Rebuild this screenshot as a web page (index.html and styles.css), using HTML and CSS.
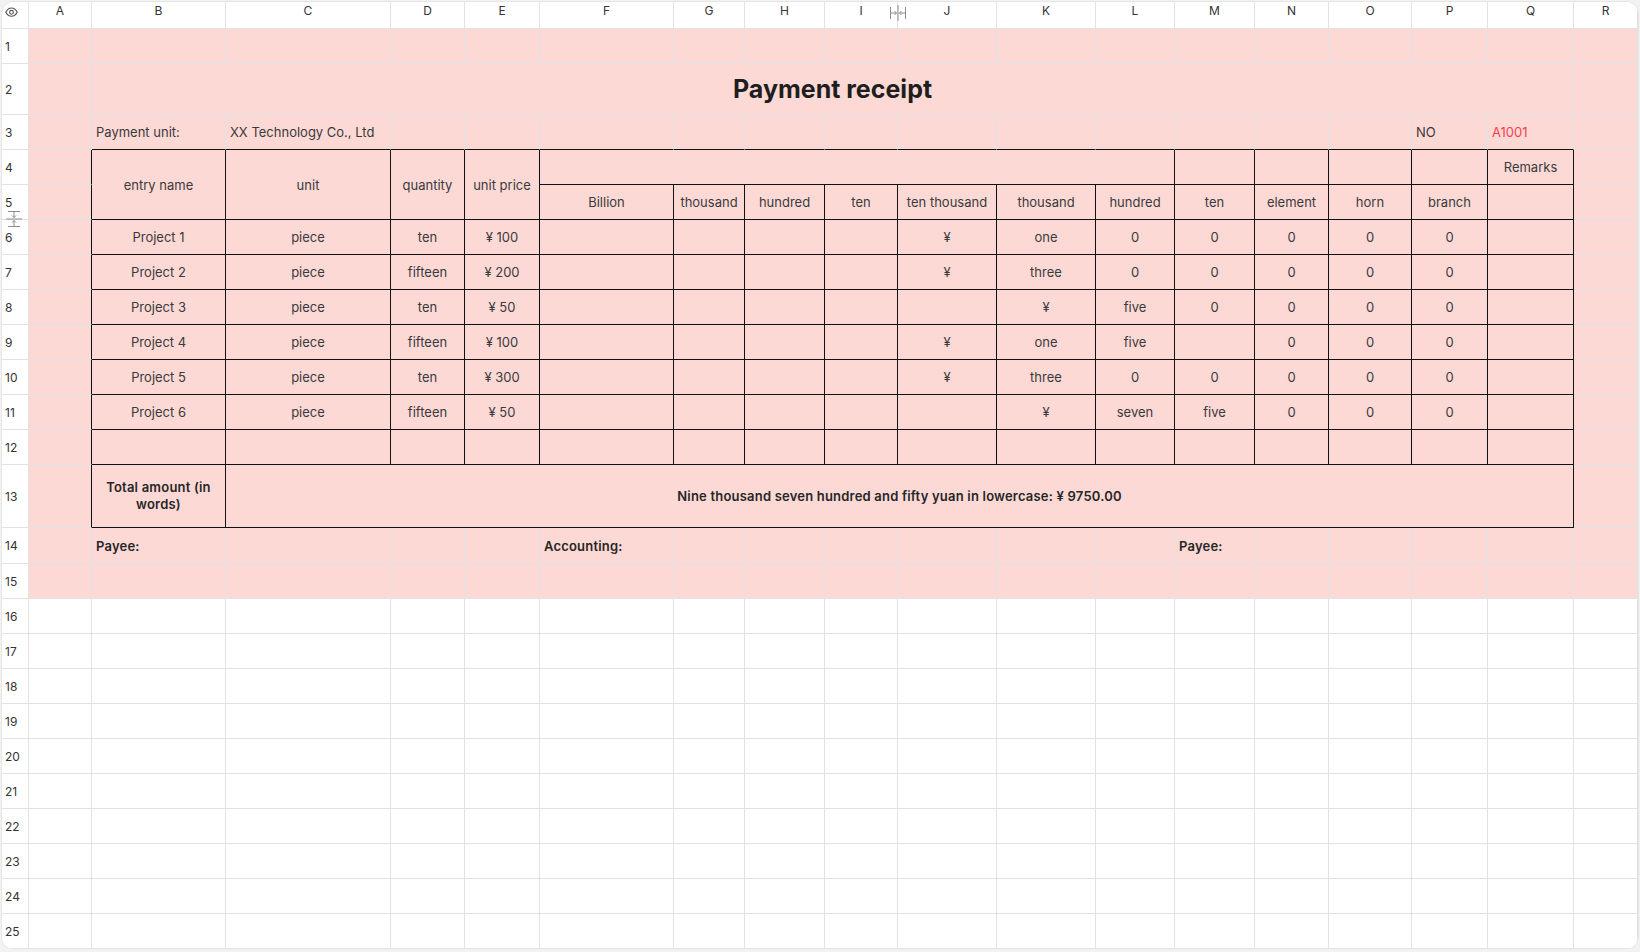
FILE: index.html
```html
<!DOCTYPE html>
<html>
<head>
  <title>Payment receipt</title>
  <link rel="stylesheet" href="styles.css">
</head>
<body>
  <div class="sheet">
    <!-- column letters -->
    <div class="row head">
      <div class="corner">
        <svg width="13" height="10" viewBox="0 0 13 10" fill="none" stroke="#555" stroke-width="1.1">
          <path d="M0.8 5.2C2.3 2.4 4.2 1 6.5 1s4.2 1.4 5.7 4.2C10.7 8 8.8 9.2 6.5 9.2S2.3 8 0.8 5.2z"/>
          <circle cx="6.5" cy="5.3" r="1.9"/>
        </svg>
      </div>
      <div>A</div><div>B</div><div>C</div><div>D</div><div>E</div><div>F</div><div>G</div><div>H</div>
      <div class="drag">I
        <svg class="cursor-col" width="18" height="16" viewBox="0 0 18 16" fill="none" stroke="#8c8c8c" stroke-width="1">
          <path d="M1.5 2v12M16.5 2v12M9 0v16"/>
          <path d="M2 8h5.5M5.5 6l2 2-2 2M16 8h-5.5M12.5 6l-2 2 2 2"/>
        </svg>
      </div>
      <div>J</div><div>K</div><div>L</div><div>M</div><div>N</div><div>O</div><div>P</div><div>Q</div><div>R</div>
    </div>

    <div class="row pink">
      <div class="rh">1</div>
      <div></div><div></div><div></div><div></div><div></div><div></div><div></div><div></div><div></div>
      <div></div><div></div><div></div><div></div><div></div><div></div><div></div><div></div><div></div>
    </div>

    <div class="row pink">
      <div class="rh">2</div>
      <div></div>
      <div class="title cs16">Payment receipt</div>
      <div></div>
    </div>

    <div class="row pink edge">
      <div class="rh">3</div>
      <div class="g"></div>
      <div class="l">Payment unit:</div>
      <div class="l">XX Technology Co., Ltd</div>
      <div></div><div></div><div></div><div></div><div></div><div></div>
      <div></div><div></div><div></div><div></div><div></div><div></div>
      <div class="l">NO</div>
      <div class="l red">A1001</div>
      <div class="g"></div>
    </div>

    <!-- receipt table -->
    <div class="row pink t">
      <div class="rh">4</div>
      <div class="a"></div>
      <div class="rs2">entry name</div>
      <div class="rs2">unit</div>
      <div class="rs2">quantity</div>
      <div class="rs2">unit price</div>
      <div class="cs7"></div>
      <div></div><div></div><div></div><div></div>
      <div>Remarks</div>
      <div class="g"></div>
    </div>

    <div class="row pink t">
      <div class="rh drag">5
        <svg class="cursor-row" width="16" height="18" viewBox="0 0 16 18" fill="none" stroke="#8c8c8c" stroke-width="1">
          <path d="M2 1.5h12M2 16.5h12M0 9h16"/>
          <path d="M8 2v5.5M6 5.5l2 2 2-2M8 16v-5.5M6 12.5l2-2 2 2"/>
        </svg>
      </div>
      <div class="a"></div>
      <div>Billion</div><div>thousand</div><div>hundred</div><div>ten</div><div>ten thousand</div><div>thousand</div>
      <div>hundred</div><div>ten</div><div>element</div><div>horn</div><div>branch</div><div></div>
      <div class="g"></div>
    </div>

    <div class="row pink t">
      <div class="rh">6</div>
      <div class="a"></div>
      <div>Project 1</div><div>piece</div><div>ten</div><div>¥ 100</div>
      <div></div><div></div><div></div><div></div>
      <div>¥</div><div>one</div><div>0</div><div>0</div><div>0</div><div>0</div><div>0</div><div></div>
      <div class="g"></div>
    </div>

    <div class="row pink t">
      <div class="rh">7</div>
      <div class="a"></div>
      <div>Project 2</div><div>piece</div><div>fifteen</div><div>¥ 200</div>
      <div></div><div></div><div></div><div></div>
      <div>¥</div><div>three</div><div>0</div><div>0</div><div>0</div><div>0</div><div>0</div><div></div>
      <div class="g"></div>
    </div>

    <div class="row pink t">
      <div class="rh">8</div>
      <div class="a"></div>
      <div>Project 3</div><div>piece</div><div>ten</div><div>¥ 50</div>
      <div></div><div></div><div></div><div></div>
      <div></div><div>¥</div><div>five</div><div>0</div><div>0</div><div>0</div><div>0</div><div></div>
      <div class="g"></div>
    </div>

    <div class="row pink t">
      <div class="rh">9</div>
      <div class="a"></div>
      <div>Project 4</div><div>piece</div><div>fifteen</div><div>¥ 100</div>
      <div></div><div></div><div></div><div></div>
      <div>¥</div><div>one</div><div>five</div><div></div><div>0</div><div>0</div><div>0</div><div></div>
      <div class="g"></div>
    </div>

    <div class="row pink t">
      <div class="rh">10</div>
      <div class="a"></div>
      <div>Project 5</div><div>piece</div><div>ten</div><div>¥ 300</div>
      <div></div><div></div><div></div><div></div>
      <div>¥</div><div>three</div><div>0</div><div>0</div><div>0</div><div>0</div><div>0</div><div></div>
      <div class="g"></div>
    </div>

    <div class="row pink t">
      <div class="rh">11</div>
      <div class="a"></div>
      <div>Project 6</div><div>piece</div><div>fifteen</div><div>¥ 50</div>
      <div></div><div></div><div></div><div></div>
      <div></div><div>¥</div><div>seven</div><div>five</div><div>0</div><div>0</div><div>0</div><div></div>
      <div class="g"></div>
    </div>

    <div class="row pink t">
      <div class="rh">12</div>
      <div class="a"></div>
      <div></div><div></div><div></div><div></div><div></div><div></div><div></div><div></div>
      <div></div><div></div><div></div><div></div><div></div><div></div><div></div><div></div>
      <div class="g"></div>
    </div>

    <div class="row pink t">
      <div class="rh">13</div>
      <div class="a"></div>
      <div class="b wrap">Total amount (in words)</div>
      <div class="b cs15">Nine thousand seven hundred and fifty yuan in lowercase: ¥ 9750.00</div>
      <div class="g"></div>
    </div>

    <div class="row pink">
      <div class="rh">14</div>
      <div></div>
      <div class="l b">Payee:</div>
      <div></div><div></div><div></div>
      <div class="l b">Accounting:</div>
      <div></div><div></div><div></div><div></div><div></div><div></div>
      <div class="l b">Payee:</div>
      <div></div><div></div><div></div><div></div><div></div>
    </div>

    <div class="row pink">
      <div class="rh">15</div>
      <div></div><div></div><div></div><div></div><div></div><div></div><div></div><div></div><div></div>
      <div></div><div></div><div></div><div></div><div></div><div></div><div></div><div></div><div></div>
    </div>

    <!-- empty rows -->
    <div class="row">
      <div class="rh">16</div>
      <div></div><div></div><div></div><div></div><div></div><div></div><div></div><div></div><div></div>
      <div></div><div></div><div></div><div></div><div></div><div></div><div></div><div></div><div></div>
    </div>
    <div class="row">
      <div class="rh">17</div>
      <div></div><div></div><div></div><div></div><div></div><div></div><div></div><div></div><div></div>
      <div></div><div></div><div></div><div></div><div></div><div></div><div></div><div></div><div></div>
    </div>
    <div class="row">
      <div class="rh">18</div>
      <div></div><div></div><div></div><div></div><div></div><div></div><div></div><div></div><div></div>
      <div></div><div></div><div></div><div></div><div></div><div></div><div></div><div></div><div></div>
    </div>
    <div class="row">
      <div class="rh">19</div>
      <div></div><div></div><div></div><div></div><div></div><div></div><div></div><div></div><div></div>
      <div></div><div></div><div></div><div></div><div></div><div></div><div></div><div></div><div></div>
    </div>
    <div class="row">
      <div class="rh">20</div>
      <div></div><div></div><div></div><div></div><div></div><div></div><div></div><div></div><div></div>
      <div></div><div></div><div></div><div></div><div></div><div></div><div></div><div></div><div></div>
    </div>
    <div class="row">
      <div class="rh">21</div>
      <div></div><div></div><div></div><div></div><div></div><div></div><div></div><div></div><div></div>
      <div></div><div></div><div></div><div></div><div></div><div></div><div></div><div></div><div></div>
    </div>
    <div class="row">
      <div class="rh">22</div>
      <div></div><div></div><div></div><div></div><div></div><div></div><div></div><div></div><div></div>
      <div></div><div></div><div></div><div></div><div></div><div></div><div></div><div></div><div></div>
    </div>
    <div class="row">
      <div class="rh">23</div>
      <div></div><div></div><div></div><div></div><div></div><div></div><div></div><div></div><div></div>
      <div></div><div></div><div></div><div></div><div></div><div></div><div></div><div></div><div></div>
    </div>
    <div class="row">
      <div class="rh">24</div>
      <div></div><div></div><div></div><div></div><div></div><div></div><div></div><div></div><div></div>
      <div></div><div></div><div></div><div></div><div></div><div></div><div></div><div></div><div></div>
    </div>
    <div class="row">
      <div class="rh">25</div>
      <div></div><div></div><div></div><div></div><div></div><div></div><div></div><div></div><div></div>
      <div></div><div></div><div></div><div></div><div></div><div></div><div></div><div></div><div></div>
    </div>
  </div>
</body>
</html>
```

FILE: styles.css
```css
body {
  margin: 0;
  padding: 2px 2px 0;
  background: #f2f2f2;
  font-family: Inter, "Noto Sans", sans-serif;
  font-size: 13px;
  color: #3a3a3a;
}

.sheet {
  display: grid;
  grid-template-columns: 27px 63px 134px 165px 74px 75px 134px 71px 80px 73px 99px 99px 79px 80px 74px 83px 76px 86px 1fr;
  grid-template-rows: 27px 35px 51px repeat(10, 35px) 63px 36px repeat(11, 35px);
  background: #fff;
  border-radius: 12px;
  box-shadow: 0 0 0 1px #e6e6e6;
  overflow: hidden;
}

.row {
  display: contents;
}

.row > div {
  display: flex;
  align-items: center;
  justify-content: center;
  min-width: 0;
  border-right: 1px solid #e2e2e2;
  border-bottom: 1px solid #e2e2e2;
  white-space: nowrap;
}

/* column letters */
.head > div {
  align-items: flex-start;
  padding-top: 1px;
  line-height: 16px;
  font-size: 12px;
  color: #333;
  background: #fff;
}

.head > .corner {
  justify-content: flex-start;
  padding: 5px 0 0 3px;
}

/* row numbers */
.row > .rh {
  justify-content: flex-start;
  padding-left: 3px;
  font-size: 12px;
  color: #333;
  background: #fff;
}

.drag {
  position: relative;
}

.cursor-col {
  position: absolute;
  top: 3px;
  right: -10px;
  z-index: 2;
}

.cursor-row {
  position: absolute;
  left: 4px;
  bottom: -9px;
  z-index: 2;
}

.pink > div {
  background: #fdd9d6;
}

/* receipt table borders */
.edge > div {
  border-bottom-color: #111;
}

.edge > .rh,
.edge > .g {
  border-bottom-color: #e2e2e2;
}

.t > div {
  border-right-color: #111;
  border-bottom-color: #111;
}

.t > .rh,
.t > .g {
  border-right-color: #e2e2e2;
  border-bottom-color: #e2e2e2;
}

.t > .a {
  border-bottom-color: #e2e2e2;
}

.rs2 {
  grid-row: span 2;
}

.cs7 {
  grid-column: span 7;
}

.cs15 {
  grid-column: span 15;
}

.cs16 {
  grid-column: span 16;
}

.row > .l {
  justify-content: flex-start;
  padding-left: 4px;
}

.title {
  font-size: 25px;
  font-weight: 700;
  color: #1e1e1e;
}

.b {
  font-weight: 600;
  letter-spacing: 0.2px;
  color: #262626;
}

.row > .wrap {
  white-space: normal;
  text-align: center;
  line-height: 17px;
  padding: 0 8px;
}

.red {
  color: #f4404f;
}
```
